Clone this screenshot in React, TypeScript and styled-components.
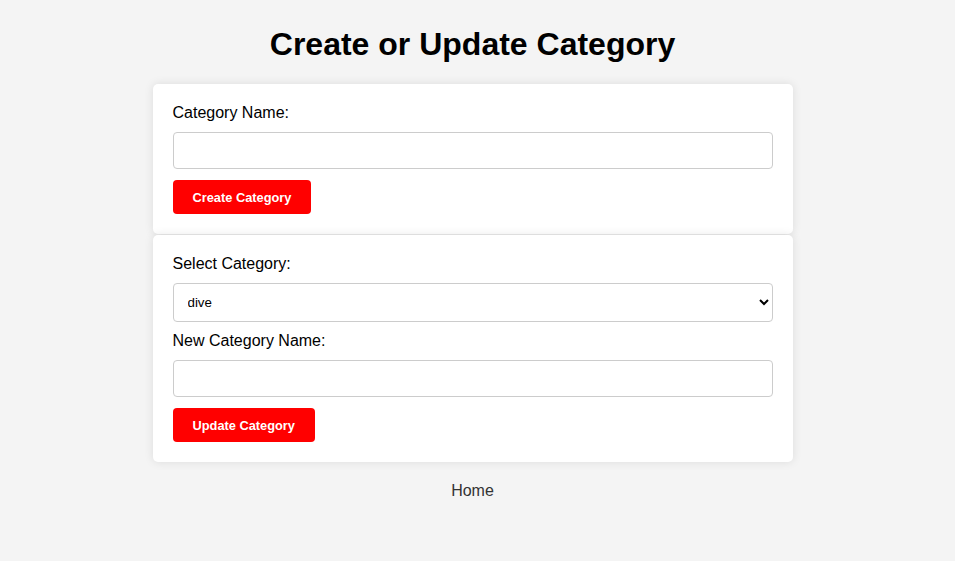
import styled, { createGlobalStyle } from "styled-components";

const GlobalStyle = createGlobalStyle`
body {
  margin: 0;
  background: #f4f4f4;
  font-family: "Liberation Sans", Arial, sans-serif;
}
`;

const Page = styled.div`
display: flex;
flex-direction: column;
align-items: center;
padding: 26px 10px 0 0;
`;

const Title = styled.h1`
margin: 0 0 21px;
font-size: 32px;
line-height: 37px;
font-weight: 700;
color: #000;
`;

const Card = styled.form`
box-sizing: border-box;
width: 640px;
padding: 20px;
margin-bottom: 1px;
background: #fff;
border-radius: 5px;
box-shadow: 0 0 10px rgba(0, 0, 0, 0.1);
display: flex;
flex-direction: column;
align-items: flex-start;
`;

const Label = styled.label`
font-size: 16px;
line-height: 18px;
color: #000;
margin-bottom: 10px;
`;

const Input = styled.input`
box-sizing: border-box;
width: 100%;
height: 37px;
padding: 8px 10px;
margin-bottom: 11px;
border: 1px solid #ccc;
border-radius: 4px;
font-size: 16px;
font-family: inherit;
`;

const Select = styled.select`
box-sizing: border-box;
width: 100%;
height: 39px;
padding: 8px 10px;
margin-bottom: 10px;
border: 1px solid #ccc;
border-radius: 4px;
background: #fff;
font-size: 13.33px;
font-family: inherit;
color: #000;
`;

const Button = styled.button`
height: 34px;
padding: 0 20px;
border: none;
border-radius: 4px;
background: #ff0000;
color: #fff;
font-family: inherit;
font-size: 12.8px;
font-weight: 700;
cursor: pointer;
`;

const HomeLink = styled.a`
margin-top: 19px;
font-size: 16px;
line-height: 18px;
color: #333;
text-decoration: none;
`;

const App = () => {
    return (
        <>
            <GlobalStyle />
            <Page>
                <Title>Create or Update Category</Title>
                <Card onSubmit={e => e.preventDefault()}>
                    <Label htmlFor="name">Category Name:</Label>
                    <Input id="name" type="text" />
                    <Button type="submit">Create Category</Button>
                </Card>
                <Card onSubmit={e => e.preventDefault()}>
                    <Label htmlFor="cat">Select Category:</Label>
                    <Select id="cat" defaultValue="dive">
                        <option value="dive">dive</option>
                    </Select>
                    <Label htmlFor="newname">New Category Name:</Label>
                    <Input id="newname" type="text" />
                    <Button type="submit">Update Category</Button>
                </Card>
                <HomeLink href="#">Home</HomeLink>
            </Page>
        </>
    )
}

export default App
